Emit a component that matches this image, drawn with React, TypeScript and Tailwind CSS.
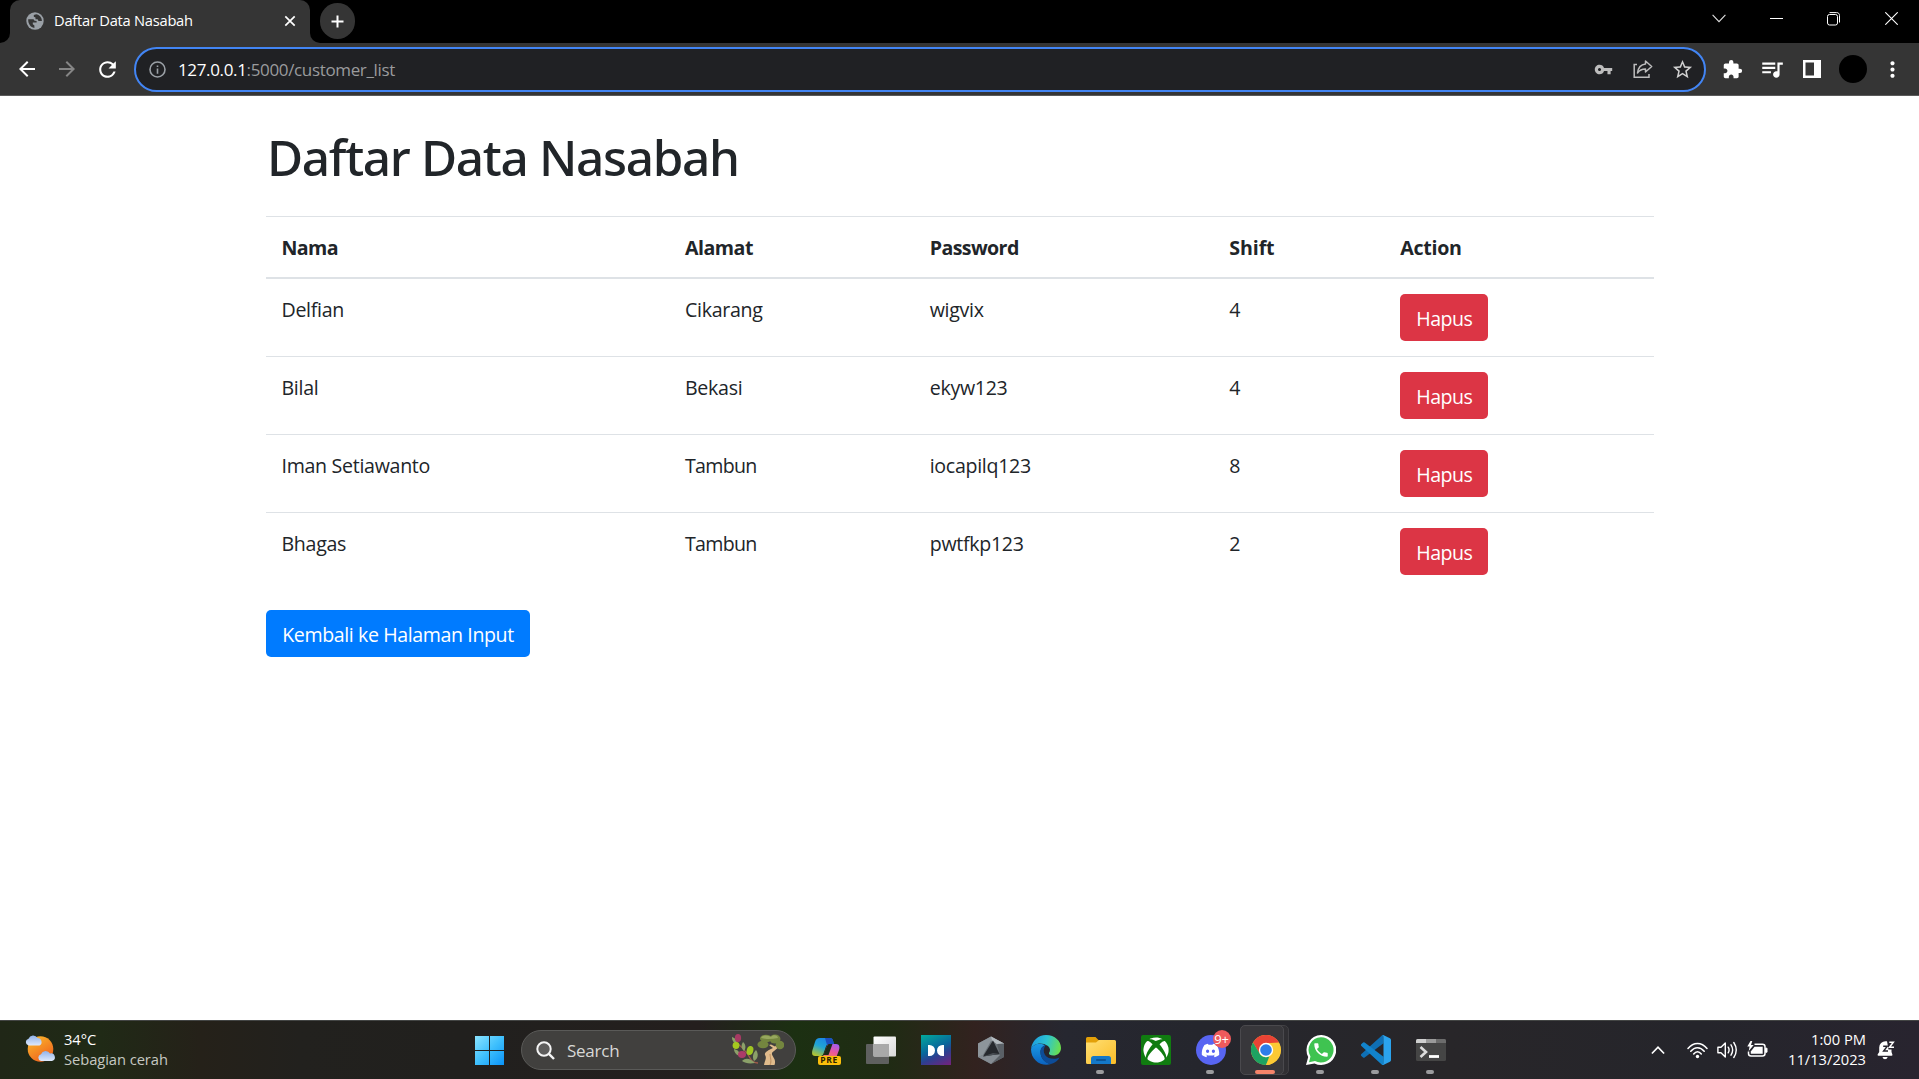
import type { ReactNode } from "react";
import {
  MdArrowBack,
  MdArrowForward,
  MdExtension,
  MdMoreVert,
  MdPhone,
  MdQueueMusic,
  MdRefresh,
  MdStarBorder,
  MdVpnKey,
} from "react-icons/md";
import { FaDiscord, FaXbox } from "react-icons/fa";

type Row = { nama: string; alamat: string; password: string; shift: string };

const rows: Row[] = [
  { nama: "Delfian", alamat: "Cikarang", password: "wigvix", shift: "4" },
  { nama: "Bilal", alamat: "Bekasi", password: "ekyw123", shift: "4" },
  { nama: "Iman Setiawanto", alamat: "Tambun", password: "iocapilq123", shift: "8" },
  { nama: "Bhagas", alamat: "Tambun", password: "pwtfkp123", shift: "2" },
];

/* ---------- Browser chrome ---------- */

function GlobeIcon() {
  return (
    <svg className="h-[18px] w-[18px]" viewBox="0 0 18 18">
      <circle cx="9" cy="9" r="8.7" fill="#9aa0a6" />
      <path
        d="M2.200 7.200C2 11.800 4.600 15.300 8.400 15.900V13.400L6.800 12.300V10.600H10.600V8.900L8.600 8.800 7.500 7.200ZM10.200 2.300 7.800 3V4.800L9.500 5.600V7.200H11.600L12.500 8.900H15.900C15.900 5.600 13.500 2.800 10.200 2.300Z"
        fill="#353535"
      />
    </svg>
  );
}

function TabStrip() {
  return (
    <div className="flex h-[43px] bg-black">
      <div className="flex w-[10px] shrink-0 items-end bg-black">
        <div className="h-[10px] w-[10px] bg-[#353535]">
          <div className="h-[10px] w-[10px] rounded-br-[10px] bg-black" />
        </div>
      </div>
      <div className="flex h-full w-[300px] items-center rounded-t-[10px] bg-[#353535] pb-[2px] pl-4 pr-[14px]">
        <GlobeIcon />
        <span className="ml-[10px] whitespace-nowrap pb-px text-[14.700px] leading-5 tracking-[-0.250px] text-white">
          Daftar Data Nasabah
        </span>
        <svg className="ml-auto h-[12px] w-[12px]" viewBox="0 0 12 12" stroke="#fff" strokeWidth="1.7">
          <path d="M1.300 1.300 10.700 10.700M10.700 1.300 1.300 10.700" />
        </svg>
      </div>
      <div className="flex w-[10px] shrink-0 items-end">
        <div className="h-[10px] w-[10px] bg-[#353535]">
          <div className="h-[10px] w-[10px] rounded-bl-[10px] bg-black" />
        </div>
      </div>
      <div className="mt-[3px] flex h-[36px] w-[35px] items-center justify-center rounded-full bg-[#353535]">
        <svg className="h-[13px] w-[13px]" viewBox="0 0 13 13" stroke="#fff" strokeWidth="2">
          <path d="M6.500 .500V12.500M.500 6.500H12.500" />
        </svg>
      </div>
      <svg className="ml-auto mr-[44px] mt-[14px] h-[9px] w-[14px]" viewBox="0 0 14 9" fill="none" stroke="#e0e0e0" strokeWidth="1.100">
        <path d="M.600.900 7 7.600 13.400.900" />
      </svg>
      <svg className="mr-[44px] mt-[12px] h-[13px] w-[13px]" viewBox="0 0 13 13" stroke="#fff">
        <path d="M0 6.500H13" />
      </svg>
      <svg className="mr-[45px] mt-[12px] h-[14px] w-[13px]" viewBox="0 0 13 14" fill="none" stroke="#fff">
        <rect x=".5" y="2.500" width="10" height="10.500" rx="2" />
        <path d="M2.500.600H9.500C11.500.600 12.500 1.700 12.500 3.500V10.500" />
      </svg>
      <svg className="mr-[21px] mt-[12px] h-[13px] w-[13px]" viewBox="0 0 13 13" stroke="#fff" strokeWidth="1.100">
        <path d="M.300.300 12.700 12.700M12.700.300.300 12.700" />
      </svg>
    </div>
  );
}

function Toolbar() {
  return (
    <div className="flex h-[53px] items-center border-b border-[#5a5a5a] bg-[#353535] text-white">
      <div className="flex w-[134px] items-center pl-[15px]">
        <MdArrowBack className="h-[24px] w-[24px]" />
        <MdArrowForward className="ml-4 h-[24px] w-[24px] text-[#868686]" />
        <MdRefresh className="ml-4 h-[25px] w-[25px]" />
      </div>
      <div className="flex h-[45px] w-[1572px] items-center rounded-full border-2 border-[#4285f4] bg-[#202124] pl-[13px] pr-[10px]">
        <svg className="h-[17px] w-[17px]" viewBox="0 0 17 17" fill="none" stroke="#9aa0a6" strokeWidth="1.600">
          <circle cx="8.500" cy="8.500" r="7.500" />
          <path d="M8.500 7.600V12.700M8.500 4.400V6" />
        </svg>
        <div className="ml-[12px] pt-px text-[17px] leading-6 tracking-[-0.350px] text-[#9a9b9d]">
          <span className="text-white">127.0.0.1</span>:5000/customer_list
        </div>
        <MdVpnKey className="ml-auto h-[19px] w-[19px] text-[#bdbdbd]" />
        <svg className="ml-[20px] h-[20px] w-[20px]" viewBox="0 0 20 20" fill="none" stroke="#bdbdbd" strokeWidth="1.500">
          <path d="M4 5.500H1.200V18.200H16V15" />
          <path d="M12.500 2 18.700 7.500 12.500 13V10C8.500 10 6.300 11.300 4.500 14 5 9.500 7.500 5.500 12.500 5Z" strokeLinejoin="round" />
        </svg>
        <MdStarBorder className="ml-[18px] h-[23px] w-[23px] text-[#d0d0d0]" />
      </div>
      <MdExtension className="ml-[16px] h-[21px] w-[21px]" />
      <MdQueueMusic className="ml-[16px] h-[26px] w-[26px]" />
      <svg className="ml-[18px] h-[18px] w-[18px]" viewBox="0 0 18 18">
        <path d="M0 0H18V18H0ZM2.500 2.500V15.500H11V2.500Z" fill="#fff" fillRule="evenodd" />
      </svg>
      <div className="ml-[18px] h-7 w-7 rounded-full bg-black" />
      <MdMoreVert className="ml-[13px] h-[25px] w-[25px]" />
    </div>
  );
}

/* ---------- Page ---------- */

const columns = "grid grid-cols-[403.500px_244.700px_299.600px_171px_1fr]";

function HapusButton() {
  return (
    <button className="flex h-[47px] w-[88px] items-center justify-center rounded-[5px] bg-[#dc3545] pt-[3px] text-[19.600px] leading-[30px] tracking-[-0.500px] text-white">
      Hapus
    </button>
  );
}

function CustomerPage() {
  return (
    <main className="h-[924px] bg-white text-[#212529]">
      <div className="mx-auto w-[1388px] pt-[31px]">
        <h1 className="mb-[29px] whitespace-nowrap pl-[1.500px] font-['Noto_Sans'] text-[49.500px] font-medium leading-[60px] tracking-[-1.330px]">
          Daftar Data Nasabah
        </h1>
        <div>
          <div className={columns + " border-b-2 border-t border-[#dee2e6] text-[19.600px] font-bold leading-[30px]"}>
            <div className="pb-[14px] pl-[16px] pt-[16px] tracking-[-0.600px]">Nama</div>
            <div className="pb-[14px] pl-[16px] pt-[16px] tracking-[-0.500px]">Alamat</div>
            <div className="pb-[14px] pl-[16px] pt-[16px] tracking-[-0.600px]">Password</div>
            <div className="pb-[14px] pl-[16px] pt-[16px] tracking-[-0.100px]">Shift</div>
            <div className="pb-[14px] pl-[16px] pt-[16px] tracking-[-0.300px]">Action</div>
          </div>
          {rows.map((row, i) => (
            <div
              key={row.nama}
              className={
                columns +
                " text-[19.600px] leading-[30px] tracking-[-0.300px] " +
                (i > 0 ? "border-t border-[#dee2e6]" : "")
              }
            >
              <div className="pl-[16px] pt-[16px]">{row.nama}</div>
              <div className={row.alamat === "Tambun" ? "pl-[16px] pt-[16px] tracking-[-0.700px]" : "pl-[16px] pt-[16px]"}>{row.alamat}</div>
              <div className="pl-[16px] pt-[16px]">{row.password}</div>
              <div className="pl-[16px] pt-[16px]">{row.shift}</div>
              <div className="py-[15px] pl-[16px]">
                <HapusButton />
              </div>
            </div>
          ))}
        </div>
        <button className="mt-5 flex h-[47px] w-[264px] items-center justify-center whitespace-nowrap rounded-[5px] bg-[#007bff] pl-px pt-[3px] text-[19.600px] leading-[30px] tracking-[-0.400px] text-white">
          Kembali ke Halaman Input
        </button>
      </div>
    </main>
  );
}

/* ---------- Taskbar icons ---------- */

function WeatherIcon() {
  return (
    <svg className="h-[30px] w-[32px]" viewBox="0 0 32 30">
      <defs>
        <linearGradient id="sun" x1="0" y1="0" x2=".6" y2="1">
          <stop offset="0" stopColor="#fbc02d" />
          <stop offset="1" stopColor="#f0641e" />
        </linearGradient>
        <linearGradient id="cloud" x1="0" y1="0" x2="0" y2="1">
          <stop offset="0" stopColor="#8fb2ea" />
          <stop offset="1" stopColor="#dfe9fb" />
        </linearGradient>
      </defs>
      <circle cx="15.500" cy="15" r="12.800" fill="url(#sun)" />
      <path d="M3.500 11.500A3.500 3.500 0 0 1 3.500 4.700 5 5 0 0 1 12.500 4 4 4 0 0 1 14.500 11.500Z" fill="url(#cloud)" />
      <path d="M16 27A3.500 3.500 0 0 1 16 20.200 5 5 0 0 1 25 19.500 3.800 3.800 0 0 1 27 27Z" fill="url(#cloud)" />
    </svg>
  );
}

function WindowsIcon() {
  return (
    <svg className="h-[29px] w-[29px]" viewBox="0 0 29 29">
      <defs>
        <linearGradient id="win" x1="0" y1="0" x2="29" y2="29" gradientUnits="userSpaceOnUse">
          <stop offset="0" stopColor="#8be4ff" />
          <stop offset=".5" stopColor="#3fc0fd" />
          <stop offset="1" stopColor="#0a93f8" />
        </linearGradient>
      </defs>
      <path d="M0 0H14V14H0ZM15 0H29V14H15ZM0 15H14V29H0ZM15 15H29V29H15Z" fill="url(#win)" />
    </svg>
  );
}

function OliveTreeArt() {
  return (
    <svg className="h-[32px] w-[53px]" viewBox="0 0 53 32">
      <path d="M2 5C8 11 15 16 19 24 21 28 24 29 27 29" fill="none" stroke="#a2594a" strokeWidth="1.300" />
      <g fill="#8ba069">
        <path d="M1 3C4 4 6 6 6 10 3 9 1 7 1 3Z" />
        <path d="M12 8C15 10 15 15 13 17 10 14 10 11 12 8Z" />
        <path d="M25 16C28 20 27 25 23 27 21 23 22 19 25 16Z" />
        <path d="M11 27C15 23 20 25 24 29 18 30 14 29 11 27Z" />
        <path d="M3 15C3 18 5 21 9 22 9 18 7 16 3 15Z" />
      </g>
      <ellipse cx="7" cy="4" rx="3.100" ry="3.900" fill="#a63a63" />
      <circle cx="5" cy="11.500" r="3.400" fill="#a5c91f" />
      <ellipse cx="19" cy="16.500" rx="3.300" ry="4.600" fill="#a0c522" transform="rotate(15 19 16.500)" />
      <ellipse cx="11" cy="20.500" rx="4" ry="3.400" fill="#ad3b68" />
      <path d="M33 31C34 26 36 24 34 21 33 18 38 16 42 14L38 11 40 10.500 44 12.500 47 10 48.500 11C47 15 42 17 41 19 40 22 46 25 43.500 31Z" fill="#e0bb8c" />
      <path d="M39 31C41 27 39 23 39 20" fill="none" stroke="#b98b5b" />
      <g fill="#74863f">
        <ellipse cx="32" cy="10.500" rx="5.500" ry="3.800" />
        <ellipse cx="35" cy="4.500" rx="6" ry="3.800" />
        <ellipse cx="44" cy="5" rx="5.500" ry="4.500" />
        <ellipse cx="49" cy="11" rx="4.300" ry="4.300" />
      </g>
      <path d="M30 3.500C33 0 38 2 40 3 42 0 47 1 47 4 41 5 35 6 30 3.500Z" fill="#97a75e" />
    </svg>
  );
}

function CopilotIcon() {
  return (
    <div className="relative h-[30px] w-[30px]">
      <svg className="h-[30px] w-[30px]" viewBox="0 0 30 30">
        <defs>
          <linearGradient id="cpa" x1=".7" y1="0" x2=".2" y2="1">
            <stop offset="0" stopColor="#1b83e8" />
            <stop offset=".5" stopColor="#20a5d4" />
            <stop offset="1" stopColor="#b5c62c" />
          </linearGradient>
          <linearGradient id="cpb" x1=".8" y1="0" x2=".3" y2="1">
            <stop offset="0" stopColor="#a35cf2" />
            <stop offset=".5" stopColor="#e855a0" />
            <stop offset="1" stopColor="#f5854f" />
          </linearGradient>
        </defs>
        <path d="M9 3H19C22 3 22 6 23 9H18C15 9 15 12 13 17 12 21 11 21 8 21H4C1 21 .600 18 1.500 15L4 7C5 4 6 3 9 3Z" fill="url(#cpa)" />
        <path d="M14 3H19C22 3 22 6 23 9H18L16 10Z" fill="#1c4fc0" />
        <path d="M18 9H25C28.500 9 29 12 28 15L25 23H9C12 22 13 20 14 17L16 11C16.500 10 17 9 18 9Z" fill="url(#cpb)" />
        <path d="M17.500 9H21.500L17.500 20H12C13 19 14 17 14 16L16 11Z" fill="#1d2b18" />
      </svg>
      <div className="absolute left-[7px] top-[21px] flex h-[9px] w-[23px] items-center justify-center rounded-[2px] bg-[#fbbf0b] text-[8.500px] font-bold leading-none tracking-[0.600px] text-[#2b2200]">
        PRE
      </div>
    </div>
  );
}

function TaskViewIcon() {
  return (
    <svg className="h-[30px] w-[30px]" viewBox="0 0 30 30">
      <defs>
        <linearGradient id="tv" x1="0" y1="0" x2="1" y2="1">
          <stop offset="0" stopColor="#fff" />
          <stop offset="1" stopColor="#d8d8d8" />
        </linearGradient>
      </defs>
      <rect x="0" y="9" width="23" height="20" rx="1" fill="#5f605f" />
      <rect x="7.500" y="1.500" width="22.500" height="20" rx="1" fill="url(#tv)" />
      <rect x="7.500" y="9" width="15.500" height="12.500" fill="#a9a9a9" />
    </svg>
  );
}

function DolbyIcon() {
  return (
    <div className="flex h-[30px] w-[30px] items-center justify-center bg-[linear-gradient(155deg,#02ab9c_0%,#08689c_45%,#2d3f90_65%,#76217c_100%)]">
      <svg className="h-[11px] w-[16px]" viewBox="0 0 16 11" fill="#fff">
        <path d="M0 0H1.500A5.500 5.500 0 0 1 1.500 11H0ZM16 0H14.500A5.500 5.500 0 0 0 14.500 11H16Z" />
      </svg>
    </div>
  );
}

function HexIcon() {
  return (
    <svg className="h-[30px] w-[30px]" viewBox="0 0 30 30">
      <path d="M15 1.500 28 8.500V22L15 29 2 22V8.500Z" fill="#6c7379" />
      <path d="M15 1.500 2 8.500V22L7 20 15 6 24 9.500 28 8.500Z" fill="#8d959b" />
      <path d="M15 1.500 28 8.500 24 12 16 5Z" fill="#b4bbc0" />
      <path d="M28 8.500V22L15 29 9 23 24 20 21 9Z" fill="#5a6066" />
      <path d="M2 22 7 20 24 20 15 29Z" fill="#858c93" />
      <path d="M17 5.500 23.500 19 7 21.500Z" fill="#26292e" />
      <path d="M7 21.500 17 18 23.500 19Z" fill="#4a4f55" />
    </svg>
  );
}

function EdgeIcon() {
  return (
    <svg className="h-[30px] w-[30px]" viewBox="0 0 30 30">
      <defs>
        <linearGradient id="eg1" x1="0" y1=".3" x2="1" y2=".5">
          <stop offset="0" stopColor="#1d9be0" />
          <stop offset=".5" stopColor="#2cc4d2" />
          <stop offset="1" stopColor="#6adf4e" />
        </linearGradient>
        <linearGradient id="eg2" x1="0" y1="0" x2="0" y2="1">
          <stop offset="0" stopColor="#1a9ae4" />
          <stop offset="1" stopColor="#0b62c0" />
        </linearGradient>
      </defs>
      <path d="M0 14C1 6 7 0 15 0 24 0 30 6 30 13 30 18 26 20.500 22.500 20.500 19 20.500 17.500 19 18 18 19.500 16 19.500 13 17 11 10 6 2 9 0 14Z" fill="url(#eg1)" />
      <path d="M0 14C2 9 9 7 14.500 10.300 12 10.500 9.500 14 9.500 17 9.500 23 14 28 20 29 11 32 0 26 0 14Z" fill="url(#eg2)" />
      <path d="M14.500 10.300C11 11 9 14 9.500 18 10 24 14.500 28.500 20 29 24 28 27 25.500 28.500 22.500 24 25 17 24 14 20 12 17 12.500 13.500 14.500 10.300Z" fill="#0d4c98" />
    </svg>
  );
}

function ExplorerIcon() {
  return (
    <svg className="h-[30px] w-[30px]" viewBox="0 0 30 30">
      <defs>
        <linearGradient id="fold" x1="0" y1="0" x2="1" y2="1">
          <stop offset="0" stopColor="#ffdf74" />
          <stop offset="1" stopColor="#fbbd27" />
        </linearGradient>
      </defs>
      <path d="M0 3.500Q0 2 1.500 2H9.500L12.500 5H27Q29 5 29 8H0Z" fill="#e3a008" />
      <path d="M0 7.500H10L13 5H28.500Q30 5 30 6.500V27.500Q30 29 28.500 29H1.500Q0 29 0 27.500Z" fill="url(#fold)" />
      <path d="M5 29V23.500Q5 21 7.500 21H22.500Q25 21 25 23.500V29Z" fill="#1478c8" />
      <rect x="10" y="24.300" width="10" height="1.400" rx=".7" fill="#0a4a86" />
    </svg>
  );
}

function XboxIcon() {
  return (
    <div className="flex h-[30px] w-[30px] items-center justify-center rounded-[2px] bg-[#107c10]">
      <FaXbox className="h-[26px] w-[26px] text-white" />
    </div>
  );
}

function DiscordIcon() {
  return (
    <div className="relative flex h-[30px] w-[30px] items-center justify-center rounded-full bg-[#5865f2]">
      <FaDiscord className="h-[19px] w-[19px] text-white" />
      <div className="absolute -top-[5px] left-[17px] flex h-[18px] w-[18px] items-center justify-center rounded-full bg-[#ee5a5c] text-[13px] font-medium leading-none tracking-[-0.300px] text-white">
        9+
      </div>
    </div>
  );
}

function ChromeIcon() {
  return (
    <svg className="h-[30px] w-[30px]" viewBox="0 0 30 30">
      <circle cx="15" cy="15" r="15" fill="#fcc934" />
      <path d="M2 7.500A15 15 0 0 1 28 7.500L15 8.200 8.700 18.800Z" fill="#ea4335" />
      <path d="M2 7.500 8.800 18.700C10 21 12.500 22.300 15 22.300L18.300 21.500 15 30A15 15 0 0 1 2 7.500Z" fill="#1ea362" />
      <path d="M15 30 21.200 18.600 15 8H28A15 15 0 0 1 15 30Z" fill="#fcc934" />
      <circle cx="15" cy="15" r="7.200" fill="#fff" />
      <circle cx="15" cy="15" r="5.800" fill="#2f7de9" />
    </svg>
  );
}

function WhatsAppIcon() {
  return (
    <div className="relative h-[30px] w-[30px]">
      <svg className="h-[30px] w-[30px]" viewBox="0 0 30 30">
        <path d="M15 0A15 15 0 1 1 8.500 28.400L0 30 2.200 22A15 15 0 0 1 15 0Z" fill="#fff" />
        <path d="M15 2.300A12.600 12.600 0 1 1 9 26L3 27.300 4.500 21.500A12.600 12.600 0 0 1 15 2.300Z" fill="#3fc351" />
      </svg>
      <MdPhone className="absolute left-[6px] top-[6px] h-[18px] w-[18px] text-white" />
    </div>
  );
}

function VSCodeIcon() {
  return (
    <svg className="h-[30px] w-[30px]" viewBox="0 0 24 24">
      <path
        d="M18.210.210a1.494 1.494 0 0 0-1.705.290L.326 15.260a1 1 0 0 0 .001 1.479L1.650 17.940a1 1 0 0 0 1.276.057L18.004 6.552Z"
        fill="#0f6fb4"
      />
      <path
        d="M18.210 23.790a1.494 1.494 0 0 1-1.705-.290L.326 8.740a1 1 0 0 1 .001-1.479L1.650 6.060a1 1 0 0 1 1.276-.057L18.004 17.448Z"
        fill="#1283cb"
      />
      <path d="M18.210.210 23.150 2.587A1.500 1.500 0 0 1 24 3.939V20.060a1.500 1.500 0 0 1-.850 1.352L18.210 23.790Q17.200 24 16.500 23.400C17.300 24 18 23.500 18 22.600V1.400C18 .500 17.300 0 16.500.500Q17.200-.1 18.210.210Z" fill="#2ba3ee" />
    </svg>
  );
}

function TerminalIcon() {
  return (
    <svg className="h-[22px] w-[30px]" viewBox="0 0 30 22">
      <rect width="30" height="22" rx="1.500" fill="#454545" />
      <path d="M0 4V1.500Q0 0 1.500 0H10V4Z" fill="#cfcfcf" />
      <path d="M10 0H20V4H10Z" fill="#9a9a9a" />
      <path d="M20 0H28.500Q30 0 30 1.500V4H20Z" fill="#6c6c6c" />
      <path d="M4.500 8 10 13 4.500 18" fill="none" stroke="#dcdcdc" strokeWidth="2.600" />
      <path d="M13 17.500H23" stroke="#fff" strokeWidth="2.800" />
    </svg>
  );
}

function Slot({ children, running, active }: { children: ReactNode; running?: boolean; active?: boolean }) {
  return (
    <div className="relative flex h-full w-[55px] items-center justify-center">
      {active && (
        <>
          <div className="absolute left-[30px] top-[4px] h-[50px] w-[21px] rounded-[5px] border border-[#414044] bg-[#302f33]" />
          <div className="absolute left-[2px] top-[4px] h-[50px] w-[44px] rounded-[5px] border border-[#4a494d] bg-[#38373b]" />
        </>
      )}
      <div className="relative">{children}</div>
      {active && <div className="absolute bottom-[5px] left-[17px] h-[4px] w-[20px] rounded-full bg-[#f4846a]" />}
      {running && <div className="absolute bottom-[5px] left-[23px] h-[4px] w-[8px] rounded-full bg-[#9b9b9e]" />}
    </div>
  );
}

function TrayIcons() {
  return (
    <>
      <svg className="h-[10px] w-[14px]" viewBox="0 0 14 10" fill="none" stroke="#fff" strokeWidth="1.700">
        <path d="M.900 8.500 7 2.200 13.100 8.500" />
      </svg>
      <svg className="ml-[22px] h-[17px] w-[21px]" viewBox="0 0 21 17" fill="none" stroke="#fff" strokeWidth="1.500" strokeLinecap="round">
        <path d="M1 6.500C6.500-.300 14.500-.300 20 6.500M3.800 9.300C7.700 4.400 13.300 4.400 17.200 9.300M6.700 12C9 9 12 9 14.300 12" />
        <circle cx="10.500" cy="14.500" r="1.700" fill="#fff" stroke="none" />
      </svg>
      <svg className="ml-[9px] h-[18px] w-[21px]" viewBox="0 0 21 18" fill="none" stroke="#fff" strokeWidth="1.400" strokeLinecap="round" strokeLinejoin="round">
        <path d="M.900 6.200H4L8.300 2V16L4 11.800H.900Z" />
        <path d="M11.200 6.200Q13 9 11.200 11.800M14 3.800Q17.300 9 14 14.200M16.800 1.500Q21.700 9 16.800 16.500" />
      </svg>
      <svg className="ml-[9px] h-[18px] w-[21px]" viewBox="0 0 21 18">
        <path d="M7.500 3.300H15.500Q18 3.300 18 5.800V12.500Q18 15 15.500 15H4Q1.500 15 1.500 12.500V10.500" fill="none" stroke="#fff" strokeWidth="1.500" />
        <path d="M18.500 7.200H20V11.200H18.500Z" fill="#fff" stroke="#fff" />
        <path d="M7.500 5.700H15.700V12.700H3.800V10.500Z" fill="#fff" />
        <path d="M3.500 0 .300 5.500H2.600L1.700 10 6.700 4H4L5.300 0Z" fill="#fff" />
      </svg>
    </>
  );
}

function BellIcon() {
  return (
    <svg className="h-[20px] w-[18px]" viewBox="0 0 18 20">
      <path d="M10 1.200H8.500A6.300 6.300 0 0 0 2.200 7.500V12L.600 14.500Q.400 15.700 1.500 15.700H14.500Q15.700 15.700 15.400 14.500L14.500 12V9.500H11.500Z" fill="#fff" />
      <path d="M5.500 17H10.700Q10 19.300 8 19.300T5.500 17Z" fill="#fff" />
      <path d="M12.300 2.200H16.300L12.500 7.200H17" fill="none" stroke="#fff" strokeWidth="1.500" />
      <path d="M6.200 6.200H10.300L6.600 11H11" fill="none" stroke="#26242d" strokeWidth="1.400" />
    </svg>
  );
}

function Taskbar() {
  return (
    <footer className="flex h-[59px] items-center border-t border-[#434544] bg-[linear-gradient(90deg,#202717_0px,#202a16_100px,#252119_200px,#22211e_300px,#21201e_460px,#241f1e_700px,#1c3012_795px,#202b14_890px,#32221f_975px,#262730_1065px,#25262d_1200px,#282629_1450px,#25252b_1700px,#28242f_1919px)] text-white">
      <div className="flex w-[475px] items-center pb-[2px] pl-[25px]">
        <WeatherIcon />
        <div className="pl-[7px] text-[14.700px] leading-5 tracking-[-0.050px]">
          <div>34°C</div>
          <div className="text-[#c6c8c2]">Sebagian cerah</div>
        </div>
      </div>
      <WindowsIcon />
      <div className="ml-[17px] flex h-[40px] w-[275px] items-center rounded-full border border-[#5a5a58] bg-[#41403e] pl-[14px] pr-[11px]">
        <svg className="h-[19px] w-[19px]" viewBox="0 0 19 19" fill="none" stroke="#f4f4f4" strokeWidth="2">
          <circle cx="8" cy="8" r="6.700" fill="#5e5d5c" />
          <path d="M12.900 12.900 18 18" strokeWidth="2.400" />
        </svg>
        <span className="ml-[12px] pt-px text-[17px] leading-6 tracking-[-0.250px] text-[#d8d8d6]">Search</span>
        <div className="ml-auto">
          <OliveTreeArt />
        </div>
      </div>
      <div className="ml-[2px] flex h-full">
        <Slot><CopilotIcon /></Slot>
        <Slot><TaskViewIcon /></Slot>
        <Slot><DolbyIcon /></Slot>
        <Slot><HexIcon /></Slot>
        <Slot><EdgeIcon /></Slot>
        <Slot running><ExplorerIcon /></Slot>
        <Slot><XboxIcon /></Slot>
        <Slot running><DiscordIcon /></Slot>
        <Slot active><ChromeIcon /></Slot>
        <Slot running><WhatsAppIcon /></Slot>
        <Slot running><VSCodeIcon /></Slot>
        <Slot running><TerminalIcon /></Slot>
      </div>
      <div className="ml-auto flex items-center pr-[24px]">
        <TrayIcons />
        <div className="w-[98px] pb-[2px] text-right text-[14.700px] leading-5">
          <div>1:00 PM</div>
          <div>11/13/2023</div>
        </div>
        <div className="ml-[11px]">
          <BellIcon />
        </div>
      </div>
    </footer>
  );
}

export default function App() {
  return (
    <div className="h-[1079px] w-[1919px] overflow-hidden font-['Open_Sans','Noto_Sans',sans-serif]">
      <TabStrip />
      <Toolbar />
      <CustomerPage />
      <Taskbar />
    </div>
  );
}
